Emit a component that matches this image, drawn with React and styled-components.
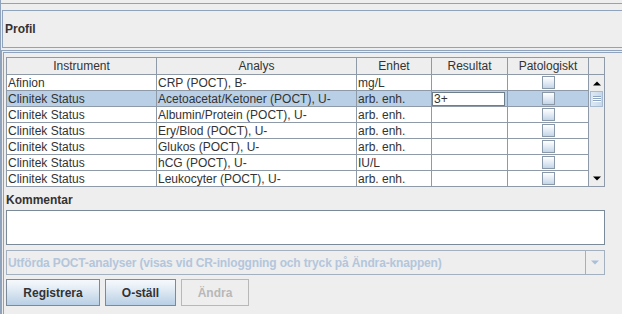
import React from "react";
import styled, { createGlobalStyle } from "styled-components";

const GlobalStyle = createGlobalStyle`
    html, body {
        margin: 0;
        padding: 0;
        background: #eeeeee;
    }
    body {
        font-family: "Liberation Sans", Arial, sans-serif;
        font-size: 12px;
        color: #333333;
    }
`;

const LINE = "#8fa3bd";
const GRID = "#8e9aa8";

const Frame = styled.div`
    width: 622px;
    height: 314px;
    box-sizing: border-box;
    overflow: hidden;
    background: #eeeeee;
    border-left: 1px solid ${LINE};
`;

const TopRule = styled.div`
    height: 3px;
    border-bottom: 1px solid ${LINE};
`;

const ProfilBox = styled.div`
    margin: 6px 0 0 1px;
    height: 36px;
    border: 1px solid ${LINE};
    border-right: none;
    display: flex;
    align-items: center;
    padding-left: 2px;
`;

const SectionTitle = styled.div`
    font-weight: bold;
    font-size: 12px;
    color: #333333;
    line-height: 14px;
`;

const MainPanel = styled.div`
    margin-top: 2px;
    border-top: 3px double ${LINE};
    border-left: 3px double ${LINE};
    padding: 4px 0 0 2px;
    height: 300px;
`;

const ScrollPane = styled.div`
    display: flex;
    width: 599px;
`;

const Grid = styled.div`
    width: 583px;
    box-sizing: border-box;
    border-top: 1px solid ${GRID};
    border-left: 1px solid ${GRID};
`;

const Row = styled.div`
    display: grid;
    grid-template-columns: 150px 200px 75px 76px 81px;
    height: ${(p) => (p.$header ? "17px" : "16px")};
    background: ${(p) => (p.$header ? "#eeeeee" : p.$selected ? "#b8cfe5" : "#ffffff")};
`;

const Cell = styled.div`
    box-sizing: border-box;
    border-right: 1px solid ${GRID};
    border-bottom: 1px solid ${GRID};
    padding: 0 1px;
    display: flex;
    align-items: center;
    justify-content: ${(p) => (p.$center ? "center" : "flex-start")};
    white-space: nowrap;
    overflow: hidden;
    line-height: 14px;
    color: #333333;
`;

const EditBox = styled.div`
    box-sizing: border-box;
    width: 73px;
    height: 14px;
    margin-left: -1px;
    background: #ffffff;
    border: 1px solid #6f7e8c;
    padding-left: 1px;
    line-height: 12px;
    display: flex;
    align-items: center;
`;

const Check = styled.span`
    display: block;
    width: 13px;
    height: 13px;
    box-sizing: border-box;
    border: 1px solid #8a99aa;
    background: linear-gradient(to bottom, #ffffff 0%, #e6eef6 45%, #c4d5e8 100%);
`;

const ScrollColumn = styled.div`
    width: 16px;
    display: flex;
    flex-direction: column;
`;

const Corner = styled.div`
    height: 18px;
    box-sizing: border-box;
    border-top: 1px solid ${GRID};
    border-right: 1px solid ${GRID};
    border-bottom: 1px solid ${GRID};
    background: #eeeeee;
`;

const Track = styled.div`
    height: 112px;
    box-sizing: border-box;
    border-right: 1px solid ${GRID};
    border-bottom: 1px solid ${GRID};
    background: #eeeeee;
    display: flex;
    flex-direction: column;
`;

const ArrowButton = styled.div`
    height: 16px;
    display: flex;
    align-items: center;
    justify-content: center;
    background: #eeeeee;
`;

const Thumb = styled.div`
    height: 16px;
    margin: 0 1px 0 1px;
    box-sizing: border-box;
    border: 1px solid #a9bbd0;
    background: linear-gradient(to right, #dde8f3 0%, #c8d9ec 100%);
    display: flex;
    align-items: center;
    justify-content: center;
`;

const TrackFill = styled.div`
    flex: 1;
`;

const FieldLabel = styled(SectionTitle)`
    margin-top: 6px;
`;

const TextArea = styled.div`
    margin-top: 3px;
    width: 599px;
    height: 35px;
    box-sizing: border-box;
    background: #ffffff;
    border: 1px solid #7a8a99;
`;

const Combo = styled.div`
    margin-top: 5px;
    width: 599px;
    height: 25px;
    box-sizing: border-box;
    border: 1px solid #a3b0bf;
    background: #eeeeee;
    display: flex;
`;

const ComboText = styled.div`
    flex: 1;
    display: flex;
    align-items: center;
    padding-left: 1px;
    font-weight: bold;
    letter-spacing: -0.15px;
    color: #b3c6dc;
    white-space: nowrap;
    overflow: hidden;
`;

const ComboButton = styled.div`
    width: 18px;
    border-left: 1px solid #a3b0bf;
    display: flex;
    align-items: center;
    justify-content: center;
`;

const ButtonRow = styled.div`
    margin-top: 4px;
    display: flex;
    gap: 5px;
`;

const Button = styled.button`
    width: ${(p) => p.$w}px;
    height: 27px;
    box-sizing: border-box;
    padding: 0;
    font-family: "Liberation Sans", Arial, sans-serif;
    font-size: 12px;
    font-weight: bold;
    color: ${(p) => (p.disabled ? "#b8b8b8" : "#333333")};
    border: 1px solid ${(p) => (p.disabled ? "#b8b8b8" : "#7a8a99")};
    background: ${(p) =>
        p.disabled
            ? "#eeeeee"
            : "linear-gradient(to bottom, #f6f9fc 0%, #e3ecf5 35%, #b8cfe5 100%)"};
`;

const Triangle = ({ up, color = "#000" }) => (
    <svg width="8" height="5" viewBox="0 0 8 5">
        {up ? (
            <path d="M0 4.5 L4 0.5 L8 4.5 Z" fill={color} />
        ) : (
            <path d="M0 0.5 L8 0.5 L4 4.5 Z" fill={color} />
        )}
    </svg>
);

const Grip = () => (
    <svg width="8" height="6" viewBox="0 0 8 6">
        <path d="M0 0.5 H8 M0 2.5 H8 M0 4.5 H8" stroke="#8fa6c2" strokeWidth="1" />
        <path d="M0 1.5 H8 M0 3.5 H8 M0 5.5 H8" stroke="#ffffff" strokeWidth="1" />
    </svg>
);

const rows = [
    { instrument: "Afinion", analys: "CRP (POCT), B-", enhet: "mg/L" },
    {
        instrument: "Clinitek Status",
        analys: "Acetoacetat/Ketoner (POCT), U-",
        enhet: "arb. enh.",
        selected: true,
        edit: "3+",
    },
    { instrument: "Clinitek Status", analys: "Albumin/Protein (POCT), U-", enhet: "arb. enh." },
    { instrument: "Clinitek Status", analys: "Ery/Blod (POCT), U-", enhet: "arb. enh." },
    { instrument: "Clinitek Status", analys: "Glukos (POCT), U-", enhet: "arb. enh." },
    { instrument: "Clinitek Status", analys: "hCG (POCT), U-", enhet: "IU/L" },
    { instrument: "Clinitek Status", analys: "Leukocyter (POCT), U-", enhet: "arb. enh." },
];

const headers = ["Instrument", "Analys", "Enhet", "Resultat", "Patologiskt"];

const App = () => {
    return (
        <>
            <GlobalStyle />
            <Frame>
                <TopRule />
                <ProfilBox>
                    <SectionTitle>Profil</SectionTitle>
                </ProfilBox>
                <MainPanel>
                    <ScrollPane>
                        <Grid>
                            <Row $header>
                                {headers.map((h) => (
                                    <Cell key={h} $center>
                                        {h}
                                    </Cell>
                                ))}
                            </Row>
                            {rows.map((r, i) => (
                                <Row key={i} $selected={r.selected}>
                                    <Cell>{r.instrument}</Cell>
                                    <Cell>{r.analys}</Cell>
                                    <Cell>{r.enhet}</Cell>
                                    <Cell>{r.edit && <EditBox>{r.edit}</EditBox>}</Cell>
                                    <Cell $center>
                                        <Check />
                                    </Cell>
                                </Row>
                            ))}
                        </Grid>
                        <ScrollColumn>
                            <Corner />
                            <Track>
                                <ArrowButton>
                                    <Triangle up />
                                </ArrowButton>
                                <Thumb>
                                    <Grip />
                                </Thumb>
                                <TrackFill />
                                <ArrowButton>
                                    <Triangle />
                                </ArrowButton>
                            </Track>
                        </ScrollColumn>
                    </ScrollPane>
                    <FieldLabel>Kommentar</FieldLabel>
                    <TextArea />
                    <Combo>
                        <ComboText>
                            Utförda POCT-analyser (visas vid CR-inloggning och tryck på Ändra-knappen)
                        </ComboText>
                        <ComboButton>
                            <Triangle color="#a9bfd8" />
                        </ComboButton>
                    </Combo>
                    <ButtonRow>
                        <Button $w={94}>Registrera</Button>
                        <Button $w={71}>O-ställ</Button>
                        <Button $w={68} disabled>
                            Ändra
                        </Button>
                    </ButtonRow>
                </MainPanel>
            </Frame>
        </>
    );
};

export default App;
